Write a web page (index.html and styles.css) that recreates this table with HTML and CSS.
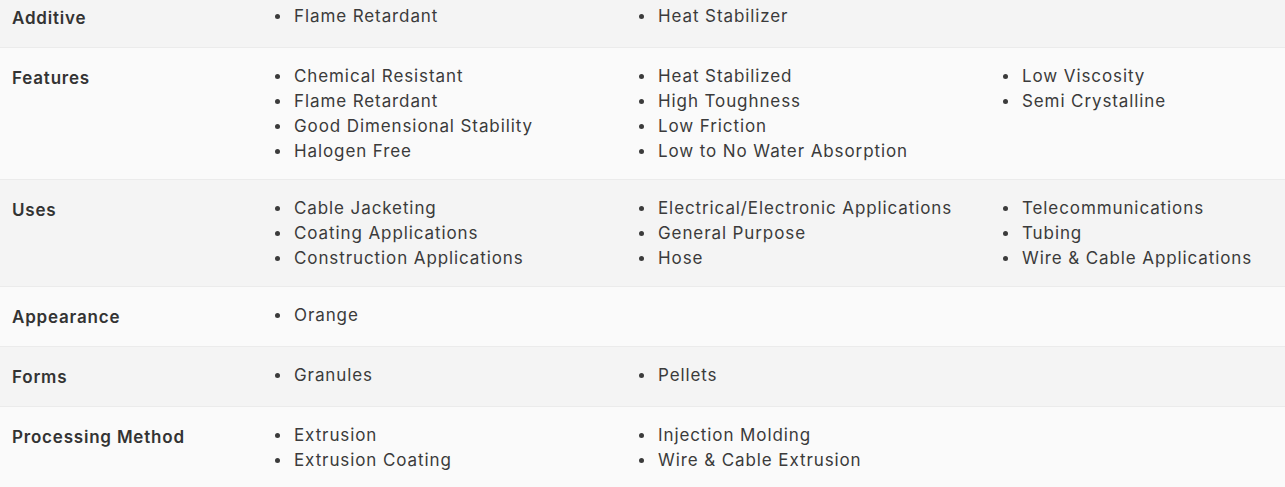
FILE: index.html
```html
<!DOCTYPE html>
<html lang="en">
<head>
<meta charset="utf-8">
<title>Product properties</title>
<link rel="stylesheet" href="styles.css">
</head>
<body>
<div class="props">
  <div class="row odd">
    <div class="label">Additive</div>
    <div class="values">
      <ul class="col"><li>Flame Retardant</li></ul>
      <ul class="col"><li>Heat Stabilizer</li></ul>
    </div>
  </div>
  <div class="row even">
    <div class="label">Features</div>
    <div class="values">
      <ul class="col"><li>Chemical Resistant</li><li>Flame Retardant</li><li>Good Dimensional Stability</li><li>Halogen Free</li></ul>
      <ul class="col"><li>Heat Stabilized</li><li>High Toughness</li><li>Low Friction</li><li>Low to No Water Absorption</li></ul>
      <ul class="col"><li>Low Viscosity</li><li>Semi Crystalline</li></ul>
    </div>
  </div>
  <div class="row odd">
    <div class="label">Uses</div>
    <div class="values">
      <ul class="col"><li>Cable Jacketing</li><li>Coating Applications</li><li>Construction Applications</li></ul>
      <ul class="col"><li>Electrical/Electronic Applications</li><li>General Purpose</li><li>Hose</li></ul>
      <ul class="col"><li>Telecommunications</li><li>Tubing</li><li>Wire &amp; Cable Applications</li></ul>
    </div>
  </div>
  <div class="row even">
    <div class="label">Appearance</div>
    <div class="values">
      <ul class="col"><li>Orange</li></ul>
    </div>
  </div>
  <div class="row odd">
    <div class="label">Forms</div>
    <div class="values">
      <ul class="col"><li>Granules</li></ul>
      <ul class="col"><li>Pellets</li></ul>
    </div>
  </div>
  <div class="row even">
    <div class="label">Processing Method</div>
    <div class="values">
      <ul class="col"><li>Extrusion</li><li>Extrusion Coating</li></ul>
      <ul class="col"><li>Injection Molding</li><li>Wire &amp; Cable Extrusion</li></ul>
    </div>
  </div>
</div>
</body>
</html>
```
FILE: styles.css
```css
html, body {
  margin: 0;
  padding: 0;
  background: #fafafa;
  overflow: hidden;
}
body {
  font-family: Inter, "Noto Sans", sans-serif;
  font-size: 17px;
  letter-spacing: 0.9px;
  color: #3b3b3b;
}
.props {
  margin-top: -12px;
}
.row {
  display: grid;
  grid-template-columns: 258px minmax(0, 1fr);
  padding: 16px 12px 15px;
  border-bottom: 1px solid #ebebeb;
}
.row.odd { background: #f4f4f4; }
.row.even { background: #fafafa; }
.label {
  font-weight: 600;
  color: #333333;
  line-height: 28px;
  letter-spacing: 0.8px;
}
.values {
  display: grid;
  grid-template-columns: 364px 364px minmax(0, 1fr);
  align-items: start;
}
.col {
  list-style: none;
  margin: 0;
  padding: 0;
}
.col li {
  position: relative;
  padding-left: 24px;
  line-height: 25px;
  white-space: nowrap;
}
.col li::before {
  content: "";
  position: absolute;
  left: 5px;
  top: 10px;
  width: 5px;
  height: 5px;
  border-radius: 50%;
  background: #3b3b3b;
}
```
